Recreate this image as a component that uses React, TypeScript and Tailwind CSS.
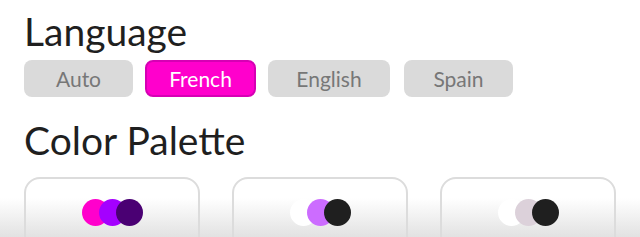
const languages = ["Auto", "French", "English", "Spain"];

const palettes = [
  ["#ff00cc", "#a400ff", "#4a0073"],
  ["#ffffff", "#cc6cff", "#1f1f1f"],
  ["#ffffff", "#dcd1da", "#1f1f1f"],
];

export default function App() {
  return (
    <div className="h-[237px] w-[640px] overflow-hidden bg-[linear-gradient(to_bottom,#ffffff_0px,#ffffff_198px,#e2e2e2_237px)] px-6 font-['Lato',sans-serif] text-[#1f1f1f]">
      <h2 className="pt-[8px] text-[39px] leading-[46px]">Language</h2>
      <div className="mt-[6px] flex gap-3">
        {languages.map((lang) => (
          <button
            key={lang}
            className={
              lang === "French"
                ? "h-[37px] w-[111px] rounded-lg border-2 border-[#d600b4] bg-[#ff00cc] text-[21px] text-white"
                : "h-[37px] w-[109px] rounded-lg bg-[#dadada] text-[21px] text-[#777777] last:ml-0.5 [&:nth-child(3)]:w-[122px]"
            }
          >
            {lang}
          </button>
        ))}
      </div>
      <h2 className="mt-[20px] text-[39px] leading-[46px]">Color Palette</h2>
      <div className="mt-[14px] flex gap-8">
        {palettes.map((colors, i) => (
          <div
            key={i}
            className="flex h-[90px] w-[177px] justify-center rounded-2xl border-2 border-[#dcdcdc] pt-[20px]"
          >
            <div className="flex">
              {colors.map((c, j) => (
                <span
                  key={j}
                  className="h-[27px] w-[27px] rounded-full [&+&]:-ml-[10px]"
                  style={{ backgroundColor: c }}
                />
              ))}
            </div>
          </div>
        ))}
      </div>
    </div>
  );
}
